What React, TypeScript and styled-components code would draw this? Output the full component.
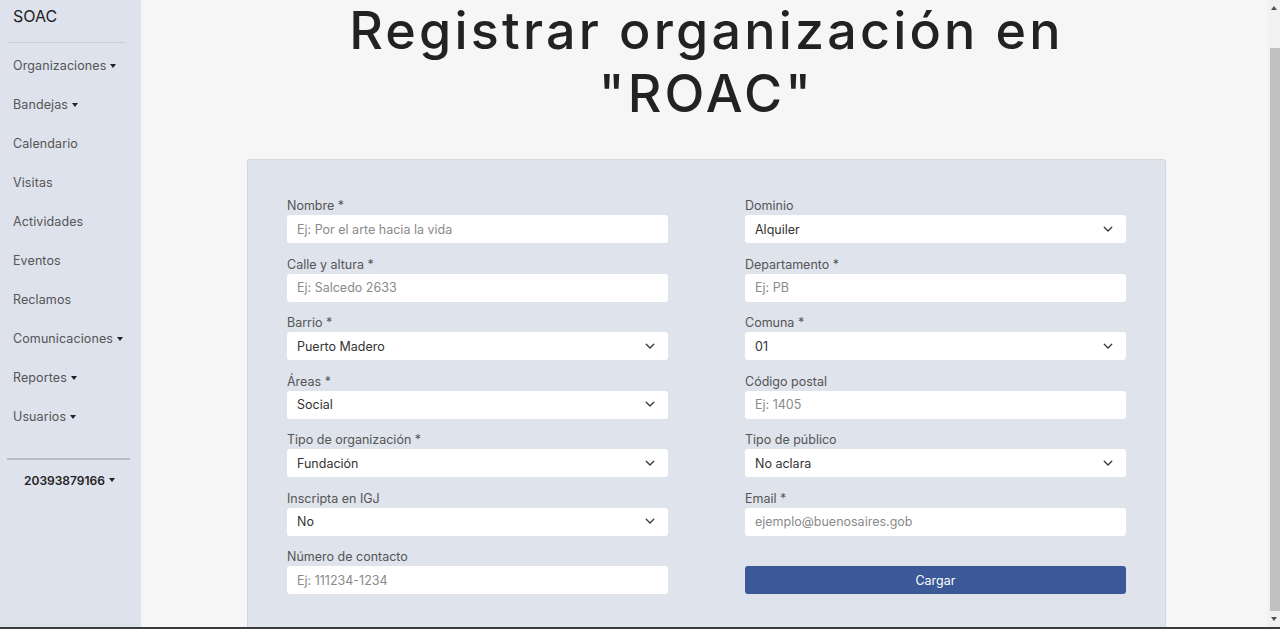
import React from "react";
import styled, { createGlobalStyle } from "styled-components";

const GlobalStyle = createGlobalStyle`
  html, body { margin: 0; padding: 0; overflow: hidden; }
  body { font-family: "Inter", "Noto Sans", sans-serif; color: #333; }
  * { box-sizing: border-box; }
`;

const Screen = styled.div`
  height: 629px;
  display: flex;
  flex-direction: column;
`;

const Viewport = styled.div`
  flex: 1;
  display: flex;
  min-height: 0;
  overflow: hidden;
`;

const BottomEdge = styled.div`
  height: 2px;
  background: #3b3b3b;
`;

const Sidebar = styled.nav`
  width: 141px;
  flex-shrink: 0;
  background: #dee2ec;
  display: flex;
  flex-direction: column;
`;

const Brand = styled.div`
  padding: 6px 0 0 13px;
  height: 42px;
  font-size: 16px;
  line-height: 20px;
  color: #222;
`;

const Divider = styled.hr<{ $left: number; $right: number; $thick: number; $color: string }>`
  margin: 0 ${(p) => p.$right}px 0 ${(p) => p.$left}px;
  border: none;
  height: ${(p) => p.$thick}px;
  background: ${(p) => p.$color};
`;

const NavList = styled.ul`
  list-style: none;
  margin: 3px 0 0;
  padding: 0;
  height: 412px;
`;

const NavItem = styled.li`
  height: 39px;
  display: flex;
  align-items: center;
  padding-left: 13px;
  font-size: 12.5px;
  color: #555;
  letter-spacing: 0.1px;
`;

const Caret = styled.span`
  display: inline-block;
  margin-left: 4px;
  width: 0;
  height: 0;
  border-top: 4px solid currentColor;
  border-left: 3.5px solid transparent;
  border-right: 3.5px solid transparent;
  vertical-align: middle;
  color: #222;
`;

const UserBox = styled.div`
  height: 40px;
  display: flex;
  align-items: center;
  justify-content: center;
  font-size: 12px;
  font-weight: 600;
  color: #222;
  padding-right: 2px;
`;

const Main = styled.main`
  flex: 1;
  background: #f6f6f6;
  display: flex;
  flex-direction: column;
  align-items: center;
  min-width: 0;
  padding-left: 4px;
`;

const Title = styled.h1`
  margin: -1px 0 0;
  font-size: 52px;
  line-height: 63px;
  font-weight: 500;
  color: #222;
  text-align: center;
  letter-spacing: 3.2px;
`;

const Card = styled.section`
  margin-top: 34px;
  width: 919px;
  background: #dfe3ec;
  border: 1px solid #d2d6de;
  border-radius: 3px;
  padding: 37px 39px 40px;
  display: grid;
  grid-template-columns: 1fr 1fr;
  column-gap: 77px;
`;

const Column = styled.div`
  display: flex;
  flex-direction: column;
  gap: 12.5px;
`;

const Field = styled.div`
  display: flex;
  flex-direction: column;
`;

const Label = styled.label`
  font-size: 12.5px;
  line-height: 18px;
  height: 18px;
  color: #555;
`;

const Input = styled.div`
  height: 28px;
  background: #fff;
  border-radius: 3px;
  display: flex;
  align-items: center;
  justify-content: space-between;
  padding: 0 12px 0 10px;
  font-size: 12.5px;
`;

const Placeholder = styled.span`
  color: #8a8a8a;
`;

const Value = styled.span`
  color: #333;
`;

const Button = styled.button`
  height: 28px;
  border: none;
  border-radius: 3px;
  background: #3b5897;
  color: #fff;
  font-family: inherit;
  font-size: 12.5px;
`;

const ScrollTrack = styled.div`
  width: 12px;
  flex-shrink: 0;
  background: #f1f1f1;
  display: flex;
  flex-direction: column;
  align-items: center;
`;

const ScrollArrow = styled.div<{ $down?: boolean }>`
  height: 16px;
  width: 100%;
  display: flex;
  align-items: center;
  justify-content: center;
  &::before {
    content: "";
    width: 0;
    height: 0;
    border-left: 3.5px solid transparent;
    border-right: 3.5px solid transparent;
    ${(p) => (p.$down ? "border-top: 4px solid #505050;" : "border-bottom: 4px solid #505050;")}
  }
`;

const ScrollThumb = styled.div`
  margin: 32px 0 0 1px;
  width: 10px;
  height: 566px;
  background: #c1c1c1;
`;

const ScrollSpace = styled.div`
  flex: 1;
`;

const Chevron = () => (
  <svg width="12" height="9" viewBox="0 0 16 12" aria-hidden>
    <path d="m3 3 5 5 5-5" fill="none" stroke="#343a40" strokeWidth="1.8" strokeLinecap="round" strokeLinejoin="round" />
  </svg>
);

type F = { label: string; text: string; select?: boolean };

const left: F[] = [
  { label: "Nombre *", text: "Ej: Por el arte hacia la vida" },
  { label: "Calle y altura *", text: "Ej: Salcedo 2633" },
  { label: "Barrio *", text: "Puerto Madero", select: true },
  { label: "Áreas *", text: "Social", select: true },
  { label: "Tipo de organización *", text: "Fundación", select: true },
  { label: "Inscripta en IGJ", text: "No", select: true },
  { label: "Número de contacto", text: "Ej: 111234-1234" },
];

const right: F[] = [
  { label: "Dominio", text: "Alquiler", select: true },
  { label: "Departamento *", text: "Ej: PB" },
  { label: "Comuna *", text: "01", select: true },
  { label: "Código postal", text: "Ej: 1405" },
  { label: "Tipo de público", text: "No aclara", select: true },
  { label: "Email *", text: "ejemplo@buenosaires.gob" },
];

const nav = [
  { t: "Organizaciones", c: true },
  { t: "Bandejas", c: true },
  { t: "Calendario" },
  { t: "Visitas" },
  { t: "Actividades" },
  { t: "Eventos" },
  { t: "Reclamos" },
  { t: "Comunicaciones", c: true },
  { t: "Reportes", c: true },
  { t: "Usuarios", c: true },
];

const FieldView = ({ f }: { f: F }) => (
  <Field>
    <Label>{f.label}</Label>
    <Input>
      {f.select ? <Value>{f.text}</Value> : <Placeholder>{f.text}</Placeholder>}
      {f.select && <Chevron />}
    </Input>
  </Field>
);

export default function App() {
  return (
    <Screen>
      <GlobalStyle />
      <Viewport>
        <Sidebar>
          <Brand>SOAC</Brand>
          <Divider $left={8} $right={16} $thick={1} $color="#c9cdd6" />
          <NavList>
            {nav.map((n) => (
              <NavItem key={n.t}>
                {n.t}
                {n.c && <Caret />}
              </NavItem>
            ))}
          </NavList>
          <Divider $left={7} $right={11} $thick={2} $color="#b9bdc6" />
          <UserBox>
            20393879166
            <Caret />
          </UserBox>
        </Sidebar>
        <Main>
          <Title>
            Registrar organización en
            <br />
            "ROAC"
          </Title>
          <Card>
            <Column>
              {left.map((f) => (
                <FieldView key={f.label} f={f} />
              ))}
            </Column>
            <Column>
              {right.map((f) => (
                <FieldView key={f.label} f={f} />
              ))}
              <Field>
                <Label />
                <Button>Cargar</Button>
              </Field>
            </Column>
          </Card>
        </Main>
        <ScrollTrack>
          <ScrollArrow />
          <ScrollThumb />
          <ScrollSpace />
          <ScrollArrow $down />
        </ScrollTrack>
      </Viewport>
      <BottomEdge />
    </Screen>
  );
}
